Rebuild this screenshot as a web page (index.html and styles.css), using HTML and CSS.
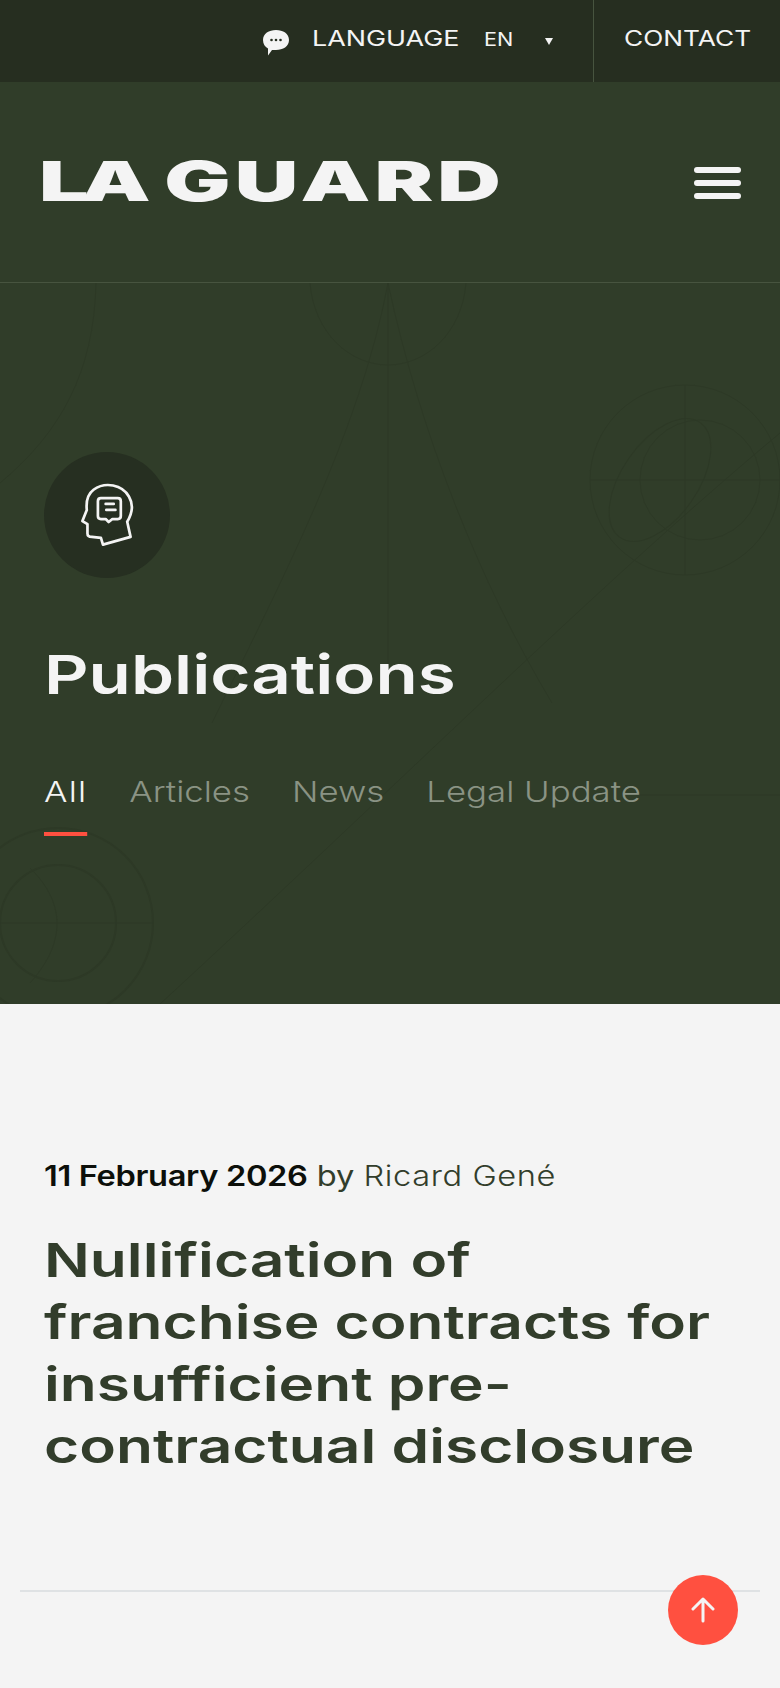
FILE: index.html
```html
<!DOCTYPE html>
<html>
<head>
    <title>Publications - La Guard</title>
    <link rel="stylesheet" href="styles.css">
</head>
<body>
    <div class="topbar">
        <svg class="chat-icon" viewBox="0 0 26 26" width="26" height="26">
            <path d="M13 0C20 0 26 3.500 26 10C26 16.500 20 20 13 20L9 20L5 25.500L5 18.500C2 17 0 14 0 10C0 3.500 6 0 13 0Z" fill="#f4f4f4"/>
            <circle cx="8.500" cy="10" r="1.300" fill="#262e20"/>
            <circle cx="13" cy="10" r="1.300" fill="#262e20"/>
            <circle cx="17.500" cy="10" r="1.300" fill="#262e20"/>
        </svg>
        <div class="lang-box">
            <span class="lang-label">LANGUAGE</span>
            <span class="lang-value">EN</span>
            <span class="lang-arrow"></span>
        </div>
        <div class="contact-box"><span class="contact-label">CONTACT</span></div>
    </div>

    <header class="header">
        <div class="logo"><span class="logo-la">LA</span> GUARD</div>
        <div class="burger"><span></span><span></span><span></span></div>
    </header>

    <section class="hero">
        <svg class="hero-lines" viewBox="0 0 780 721" width="780" height="721" fill="none" stroke="#2d3926" stroke-width="1">
            <path d="M388 0V385"/>
            <path d="M388 0C360 150 280 300 212 440"/>
            <path d="M388 0C420 150 480 300 552 420"/>
            <path d="M780 150C600 300 400 500 160 721"/>
            <path d="M96 0C94 90 60 150 0 200"/>
            <path d="M310 0C314 50 350 82 388 82C426 82 462 50 466 0"/>
            <circle cx="685" cy="197" r="95"/>
            <circle cx="700" cy="197" r="60"/>
            <ellipse cx="660" cy="197" rx="38" ry="70" transform="rotate(35 660 197)"/>
            <path d="M685 102V292M590 197H780"/>
            <path d="M640 512H780"/>
            <circle cx="58" cy="640" r="95" stroke-width="2"/>
            <circle cx="58" cy="640" r="58" stroke-width="2"/>
            <path d="M0 640H153"/>
            <path d="M30 585C66 620 66 660 30 700"/>
        </svg>
        <div class="hero-icon">
            <svg viewBox="150 125 160 190" width="54" height="64" fill="none" stroke="#f4f4f4" stroke-width="8" stroke-linejoin="round" stroke-linecap="round">
                <path d="M218 308L300 285L290 240C305 215 310 190 295 165C275 130 225 120 190 145C170 160 168 185 170 205L157 238L172 247L172 275C172 282 178 285 185 285L212 288Z"/>
                <path d="M212 170H262C268 170 271 174 271 179V223C271 228 268 232 262 232H246L235 241L226 232H212C206 232 203 228 203 223V179C203 174 206 170 212 170Z"/>
                <path d="M226 187H250M228 205H255"/>
            </svg>
        </div>
        <h1 class="hero-title">Publications</h1>
        <nav class="tabs">
            <a class="tab tab-active">All</a>
            <a class="tab">Articles</a>
            <a class="tab">News</a>
            <a class="tab">Legal Update</a>
        </nav>
    </section>

    <main class="content">
        <article class="post">
            <p class="post-meta"><strong>11 February 2026</strong> by <span class="post-author">Ricard Gené</span></p>
            <h2 class="post-title">Nullification of franchise contracts for insufficient pre-contractual disclosure</h2>
        </article>
        <hr class="divider">
    </main>

    <a class="to-top">
        <svg viewBox="0 0 26 26" width="26" height="26" fill="none" stroke="#f4f4f4" stroke-width="3" stroke-linecap="round" stroke-linejoin="round">
            <path d="M13 24V2M3 12L13 2L23 12"/>
        </svg>
    </a>
</body>
</html>
```

FILE: styles.css
```css
html, body {
    margin: 0;
    padding: 0;
    height: 100%;
    overflow: hidden;
}

body {
    font-family: Inter, "Open Sans", sans-serif;
    background-color: #f4f4f4;
    color: #323d2b;
}

/* top bar */
.topbar {
    height: 82px;
    background-color: #262e20;
    display: flex;
    justify-content: flex-end;
    align-items: center;
    color: #f4f4f4;
}

.chat-icon {
    margin-top: 4px;
    margin-right: 23px;
}

.lang-box {
    width: 282px;
    height: 82px;
    display: flex;
    align-items: center;
    border-right: 1px solid #47543f;
    box-sizing: border-box;
    position: relative;
}

.lang-label, .contact-label {
    font-size: 21px;
    line-height: 78px;
    display: inline-block;
    transform: scaleX(1.28);
    transform-origin: left center;
}

.lang-label {
    margin-top: -4px;
}

.contact-label {
    transform: scaleX(1.25);
    vertical-align: top;
}

.lang-value {
    position: absolute;
    left: 172px;
    top: 30px;
    font-size: 18px;
    line-height: 20px;
    transform: scaleX(1.2);
    transform-origin: left center;
}

.lang-arrow {
    position: absolute;
    left: 233px;
    top: 38px;
    border-left: 4px solid transparent;
    border-right: 4px solid transparent;
    border-top: 7px solid #f4f4f4;
}

.contact-box {
    width: 186px;
    height: 82px;
    padding-left: 30px;
    box-sizing: border-box;
}

/* logo row */
.header {
    height: 201px;
    background-color: #303d29;
    border-bottom: 1px solid #47543f;
    box-sizing: border-box;
    display: flex;
    justify-content: space-between;
    align-items: center;
    padding: 0 39px;
}

.logo {
    font-size: 55px;
    font-weight: 900;
    line-height: 1;
    letter-spacing: 2.5px;
    color: #f4f4f4;
    white-space: nowrap;
    transform: scaleX(1.6);
    transform-origin: left center;
    margin-top: -1px;
}

.logo-la {
    letter-spacing: -5px;
}

.burger {
    width: 47px;
    display: flex;
    flex-direction: column;
    gap: 7px;
    margin-top: 2px;
}

.burger span {
    height: 6px;
    background-color: #f4f4f4;
    border-radius: 3px;
}

/* hero */
.hero {
    height: 721px;
    background-color: #303d29;
    box-sizing: border-box;
    padding: 169px 0 0 44px;
    position: relative;
    overflow: hidden;
}

.hero-lines {
    position: absolute;
    left: 0;
    top: 0;
}

.hero-icon {
    width: 126px;
    height: 126px;
    border-radius: 50%;
    background-color: #262f21;
    display: flex;
    align-items: center;
    justify-content: center;
    position: relative;
}

.hero-title {
    margin: 62px 0 0 0;
    width: fit-content;
    font-size: 54px;
    line-height: 70px;
    font-weight: 600;
    color: #f4f4f4;
    transform: scaleX(1.28);
    transform-origin: left center;
    position: relative;
}

.tabs {
    margin-top: 62px;
    width: fit-content;
    display: flex;
    gap: 35px;
    font-size: 29px;
    transform: scaleX(1.2);
    transform-origin: left center;
    position: relative;
}

.tab {
    color: #8a9384;
    font-weight: 300;
    line-height: 40px;
    padding-bottom: 20px;
    border-bottom: 4px solid transparent;
}

.tab-active {
    color: #f4f4f4;
    border-bottom-color: #ff5040;
    letter-spacing: 1px;
}

/* posts */
.content {
    padding: 0 20px;
}

.post {
    padding: 152px 24px 0;
}

.post-meta {
    margin: 0;
    width: fit-content;
    font-size: 28px;
    line-height: 40px;
    color: #323d2b;
    white-space: nowrap;
    transform: scaleX(1.165);
    transform-origin: left center;
}

.post-meta strong {
    font-weight: 600;
    letter-spacing: -0.3px;
    color: #0c0f0a;
}

.post-author {
    font-weight: 300;
    letter-spacing: 0.5px;
}

.post-title {
    margin: 33px 0 0 0;
    width: 540px;
    font-size: 47px;
    line-height: 62px;
    font-weight: 600;
    transform: scaleX(1.285);
    transform-origin: left top;
}

.divider {
    margin: 113px 0 0;
    border: none;
    border-top: 2px solid #dfe2e4;
}

.to-top {
    position: fixed;
    right: 42px;
    bottom: 43px;
    width: 70px;
    height: 70px;
    border-radius: 50%;
    background-color: #ff5040;
    display: flex;
    align-items: center;
    justify-content: center;
}
```
